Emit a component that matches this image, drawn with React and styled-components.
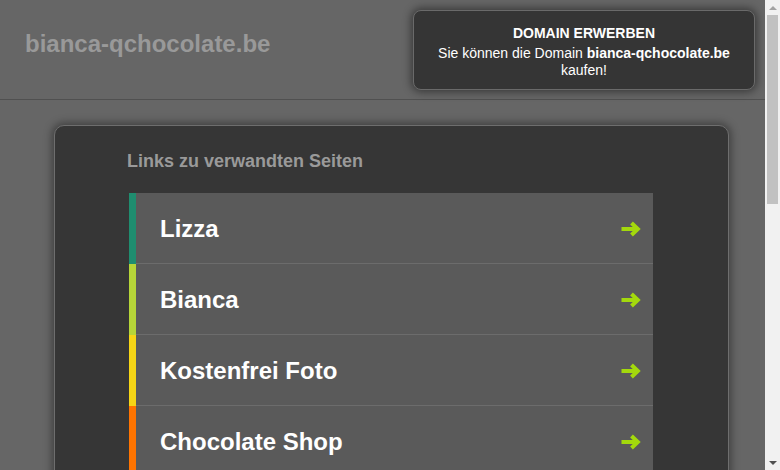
import React from 'react';
import styled, { createGlobalStyle } from 'styled-components';

const GlobalStyle = createGlobalStyle`
  html, body {
    margin: 0;
    padding: 0;
    background: #666666;
    font-family: "Liberation Sans", Arial, sans-serif;
  }
`;

const Page = styled.div`
  position: relative;
  margin-right: 15px;
`;

const Header = styled.header`
  height: 100px;
  box-sizing: border-box;
  border-bottom: 1px solid #505050;
  display: flex;
  align-items: center;
  padding: 0 25px 12px;
  h1 {
    margin: 0;
    font-size: 24px;
    font-weight: bold;
    color: #999999;
  }
`;

const Offer = styled.div`
  position: absolute;
  top: 10px;
  right: 10px;
  width: 342px;
  box-sizing: border-box;
  padding: 14px 20px 10px;
  background: #353535;
  border: 1px solid #6a6a6a;
  border-radius: 8px;
  box-shadow: 0 0 8px 2px rgba(0, 0, 0, 0.45);
  color: #ffffff;
  text-align: center;
  font-size: 14px;
  line-height: 17px;
  .title {
    font-weight: bold;
    margin-bottom: 3px;
  }
`;

const Card = styled.main`
  width: 675px;
  box-sizing: border-box;
  margin: 25px 0 25px 54px;
  padding: 25px 75px 40px 74px;
  background: #363636;
  border: 1px solid #6e6e6e;
  border-radius: 10px;
  box-shadow: 0 0 8px 2px rgba(0, 0, 0, 0.4);
  h2 {
    margin: 0 0 22px -2px;
    font-size: 18px;
    line-height: 20px;
    font-weight: bold;
    color: #9a9a9a;
  }
`;

const List = styled.ul`
  list-style: none;
  margin: 0;
  padding: 0;
`;

const Row = styled.li`
  display: flex;
  height: 71px;
  &:before {
    content: '';
    width: 7px;
    flex-shrink: 0;
    background: ${(p) => p.$color};
  }
`;

const RowLink = styled.a`
  flex: 1;
  display: flex;
  align-items: center;
  justify-content: space-between;
  padding: 1px 12px 0 24px;
  background: #5a5a5a;
  border-bottom: 1px solid #6c6c6c;
  color: #ffffff;
  text-decoration: none;
  font-size: 24px;
  font-weight: bold;
  svg {
    flex-shrink: 0;
  }
`;

const Footer = styled.footer`
  padding: 40px 0 50px;
  text-align: center;
  color: #8a8a8a;
  font-size: 12px;
  line-height: 18px;
`;

/* browser scrollbar as seen in the screenshot */
const ScrollBar = styled.div`
  position: fixed;
  top: 0;
  right: 0;
  width: 15px;
  height: 100vh;
  background: #f1f1f1;
  display: flex;
  flex-direction: column;
  align-items: center;
`;

const ScrollArrow = styled.div`
  height: 15px;
  width: 15px;
  display: flex;
  align-items: center;
  justify-content: center;
  &:after {
    content: '';
    border-left: 4px solid transparent;
    border-right: 4px solid transparent;
    ${(p) =>
      p.$down
        ? 'border-top: 4px solid #505050;'
        : 'border-bottom: 4px solid #a3a3a3;'}
  }
`;

const Thumb = styled.div`
  width: 11px;
  height: 189px;
  background: #c1c1c1;
`;

const Spacer = styled.div`
  flex: 1;
`;

const links = [
  { label: 'Lizza', color: '#1f8d6f' },
  { label: 'Bianca', color: '#b6d538' },
  { label: 'Kostenfrei Foto', color: '#f6d515' },
  { label: 'Chocolate Shop', color: '#ff7400' },
  { label: 'Schokolade', color: '#1f8d6f' },
  { label: 'Pralinen', color: '#b6d538' },
  { label: 'Geschenke', color: '#f6d515' },
  { label: 'Online Bestellen', color: '#ff7400' },
  { label: 'Süßigkeiten', color: '#1f8d6f' },
  { label: 'Rezepte', color: '#b6d538' },
];

const Arrow = () => (
  <svg width="20" height="16" viewBox="0 0 20 16">
    <path
      d="M0.5 8 H16 M10.5 2 L16.8 8 L10.5 14"
      fill="none"
      stroke="#a3d90c"
      strokeWidth="4"
      strokeLinejoin="miter"
    />
  </svg>
);

const App = () => (
  <>
    <GlobalStyle />
    <Page>
      <Header>
        <h1>bianca-qchocolate.be</h1>
      </Header>
      <Offer>
        <div className="title">DOMAIN ERWERBEN</div>
        <div>
          Sie können die Domain <b>bianca-qchocolate.be</b> kaufen!
        </div>
      </Offer>
      <Card>
        <h2>Links zu verwandten Seiten</h2>
        <List>
          {links.map((link) => (
            <Row key={link.label} $color={link.color}>
              <RowLink href="#">
                {link.label}
                <Arrow />
              </RowLink>
            </Row>
          ))}
        </List>
      </Card>
      <Footer>
        <div>Copyright © bianca-qchocolate.be</div>
        <div>Datenschutzerklärung</div>
      </Footer>
    </Page>
    <ScrollBar>
      <ScrollArrow />
      <Thumb />
      <Spacer />
      <ScrollArrow $down />
    </ScrollBar>
  </>
);

export default App;
